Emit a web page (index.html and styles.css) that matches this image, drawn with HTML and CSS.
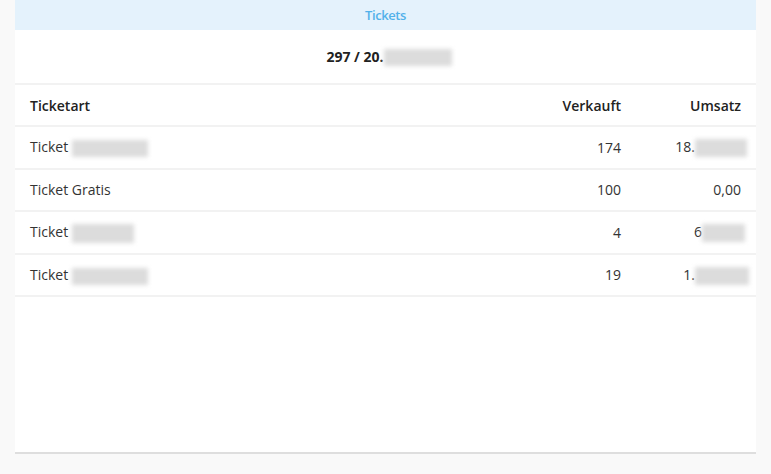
FILE: index.html
```html
<!DOCTYPE html>
<html lang="de">
<head>
<meta charset="utf-8">
<link rel="stylesheet" href="styles.css">
</head>
<body>
<div class="card">
  <div class="card-title">Tickets</div>
  <div class="total"><span>297 / 20.</span><span class="blur b-total"></span></div>
  <table class="tickets">
    <thead>
      <tr><th class="c-name">Ticketart</th><th class="c-num">Verkauft</th><th class="c-sum">Umsatz</th></tr>
    </thead>
    <tbody>
      <tr><td class="c-name">Ticket <span class="blur b-n1"></span></td><td class="c-num">174</td><td class="c-sum">18.<span class="blur b-s1"></span></td></tr>
      <tr><td class="c-name">Ticket Gratis</td><td class="c-num">100</td><td class="c-sum">0,00</td></tr>
      <tr><td class="c-name">Ticket <span class="blur b-n3"></span></td><td class="c-num">4</td><td class="c-sum">6<span class="blur b-s3"></span></td></tr>
      <tr><td class="c-name">Ticket <span class="blur b-n4"></span></td><td class="c-num">19</td><td class="c-sum">1.<span class="blur b-s4"></span></td></tr>
    </tbody>
  </table>
</div>
</body>
</html>
```

FILE: styles.css
```css
html, body { margin: 0; padding: 0; }
body {
  background: #f9f9f9;
  font-family: "Open Sans", "Liberation Sans", sans-serif;
  color: #333;
  width: 771px;
  height: 474px;
  overflow: hidden;
}
.card {
  margin: 0 15px;
  background: #fff;
  height: 452px;
  border-bottom: 2px solid #dedede;
}
.card-title {
  height: 30px;
  line-height: 31px;
  background: #e4f2fc;
  color: #52b1ea;
  text-align: center;
  font-size: 13px;
  font-weight: 600;
  letter-spacing: -0.4px;
}
.total {
  height: 53px;
  border-bottom: 2px solid #f2f2f2;
  display: flex;
  justify-content: center;
  align-items: center;
  font-weight: 700;
  font-size: 14px;
  color: #222;
  padding-left: 7px;
}
.blur {
  display: inline-block;
  background: #dcdcdc;
  filter: blur(2px);
  vertical-align: middle;
}
.b-total { width: 68px; height: 17px; margin-top: 2px; }
.tickets {
  width: 100%;
  border-collapse: collapse;
  font-size: 14px;
}
.tickets th, .tickets td {
  height: 40.5px;
  padding: 0 15px;
  border-bottom: 2px solid #f2f2f2;
  white-space: nowrap;
}
.tickets th { font-weight: 600; color: #222; height: 40px; }
.tickets td { color: #333; }
.c-name { text-align: left; }
.c-num { text-align: right; }
.c-sum { text-align: right; width: 90px; }
.b-n1 { width: 76px; height: 17px; }
.b-n3 { width: 62px; height: 19px; }
.b-n4 { width: 76px; height: 17px; }
.b-s1 { width: 52px; height: 18px; margin-right: -6px; }
.b-s3 { width: 43px; height: 18px; margin-right: -4px; }
.b-s4 { width: 54px; height: 18px; margin-right: -8px; }
```
